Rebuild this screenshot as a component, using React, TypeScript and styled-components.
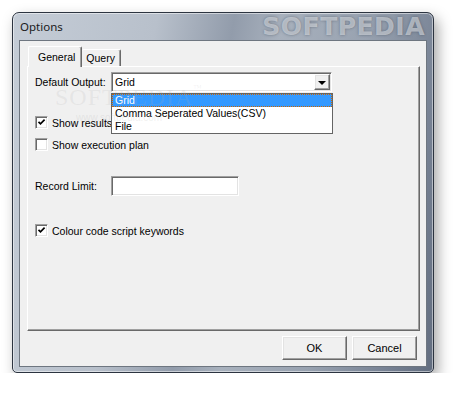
import styled, { createGlobalStyle } from "styled-components";

const GlobalStyle = createGlobalStyle`
  html, body {
    margin: 0;
    padding: 0;
    background: #ffffff;
  }
  body {
    font-family: "Liberation Sans", Arial, sans-serif;
    font-size: 10.5px;
    color: #000;
  }
`;

const OUTPUTS = ["Grid", "Comma Seperated Values(CSV)", "File"];

const CheckMark = () => (
  <svg width="9" height="9" viewBox="0 0 9 9">
    <path d="M1.5 3.8 L3.5 5.8 L7.6 1.7" fill="none" stroke="#000" strokeWidth="1.7" />
  </svg>
);

const Check = (props: { checked?: boolean; label: string }) => (
  <S.CheckRow>
    <S.Box>{props.checked && <CheckMark />}</S.Box>
    <span>{props.label}</span>
  </S.CheckRow>
);

const App = () => {
  return (
    <S.Page>
      <GlobalStyle />
      <S.Window>
        <S.TitleBar>
          <span>Options</span>
          <S.TitleMark>SOFTPEDIA</S.TitleMark>
        </S.TitleBar>

        <S.Client>
          <S.TabStrip>
            <S.Tab $active>General</S.Tab>
            <S.Tab>Query</S.Tab>
          </S.TabStrip>

          <S.Panel>
            <S.FieldRow $top={5}>
              <S.Label>Default Output:</S.Label>
              <S.Combo>
                <span>Grid</span>
                <S.ComboButton>
                  <S.Arrow />
                </S.ComboButton>
                <S.DropList>
                  {OUTPUTS.map((o, i) => (
                    <S.Option key={o} $selected={i === 0}>
                      {o}
                    </S.Option>
                  ))}
                </S.DropList>
              </S.Combo>
            </S.FieldRow>

            <S.Spacer $h={24} />
            <Check checked label="Show results in grid" />
            <S.Spacer $h={9} />
            <Check label="Show execution plan" />

            <S.FieldRow $top={25}>
              <S.Label>Record Limit:</S.Label>
              <S.TextBox />
            </S.FieldRow>

            <S.Spacer $h={28} />
            <Check checked label="Colour code script keywords" />

            <S.Mark>
              SOFTPEDIA<sup>™</sup>
            </S.Mark>
            <S.MarkUrl>www.softpedia.com</S.MarkUrl>
          </S.Panel>

          <S.ButtonBar>
            <S.Button>OK</S.Button>
            <S.Button>Cancel</S.Button>
          </S.ButtonBar>
        </S.Client>
      </S.Window>
    </S.Page>
  );
};

export default App;

const raised = `
  border: 1px solid;
  border-color: #ffffff #696969 #696969 #ffffff;
  box-shadow: inset -1px -1px 0 #a0a0a0, inset 1px 1px 0 #e3e3e3;
`;

const sunken = `
  border: 1px solid;
  border-color: #a0a0a0 #ffffff #ffffff #a0a0a0;
  box-shadow: inset 1px 1px 0 #696969, inset -1px -1px 0 #e3e3e3;
`;

const S = {
  Page: styled.div`
    padding: 12px 0 0 12px;
  `,
  Window: styled.div`
    position: relative;
    box-sizing: border-box;
    width: 422px;
    height: 361px;
    display: flex;
    flex-direction: column;
    padding: 0 6px 5px 6px;
    border: 1px solid #2c3440;
    border-radius: 7px 7px 5px 5px;
    background: linear-gradient(100deg, #c4ccd6 0%, #b8c0cb 30%, #929cab 46%, #a8b1bd 56%, #98a2b0 74%, #778294 90%, #626d7f 100%);
    box-shadow: 4px 6px 14px rgba(0, 0, 0, 0.35), inset 0 0 0 1px rgba(255, 255, 255, 0.5);
  `,
  TitleBar: styled.div`
    position: relative;
    height: 27px;
    display: flex;
    align-items: center;
    padding-left: 1px;
    font-family: "Noto Sans", "Open Sans", sans-serif;
    font-size: 11.5px;
    color: #1a1a1a;
    overflow: hidden;
  `,
  TitleMark: styled.span`
    position: absolute;
    right: 2px;
    top: -1px;
    font-family: "DejaVu Sans", sans-serif;
    font-weight: bold;
    font-size: 25px;
    letter-spacing: 0.5px;
    color: rgba(235, 238, 242, 0.55);
    text-shadow: 0 0 3px rgba(70, 80, 95, 0.6);
    pointer-events: none;
  `,
  Client: styled.div`
    flex: 1;
    display: flex;
    flex-direction: column;
    padding: 5px 6px 0 7px;
    background: #f0f0f0;
    border: 1px solid #6e7680;
  `,
  TabStrip: styled.div`
    display: flex;
    align-items: flex-end;
    height: 20px;
    padding-left: 1px;
  `,
  Tab: styled.div<{ $active?: boolean }>`
    position: relative;
    box-sizing: border-box;
    display: flex;
    align-items: center;
    height: ${(p) => (p.$active ? "21px" : "17px")};
    margin-bottom: ${(p) => (p.$active ? "-1px" : "0")};
    padding: ${(p) => (p.$active ? "0 6px 1px 9px" : "0 5px 0 4px")};
    background: #f0f0f0;
    border-top: 1px solid #ffffff;
    border-left: ${(p) => (p.$active ? "1px solid #ffffff" : "0")};
    border-right: 1px solid #696969;
    box-shadow: inset -1px 0 0 #a0a0a0;
    border-radius: 2px 2px 0 0;
    z-index: ${(p) => (p.$active ? 2 : 1)};
  `,
  Panel: styled.div`
    position: relative;
    box-sizing: border-box;
    height: 265px;
    display: flex;
    flex-direction: column;
    padding: 0 0 0 7px;
    border: 1px solid;
    border-color: #ffffff #696969 #696969 #ffffff;
    box-shadow: inset -1px -1px 0 #a0a0a0;
  `,
  FieldRow: styled.div<{ $top: number }>`
    display: flex;
    align-items: center;
    margin-top: ${(p) => p.$top}px;
  `,
  Label: styled.span`
    width: 76px;
    flex: none;
  `,
  Combo: styled.div`
    position: relative;
    box-sizing: border-box;
    width: 221px;
    height: 20px;
    display: flex;
    align-items: center;
    padding-left: 3px;
    background: #ffffff;
    ${sunken}
  `,
  ComboButton: styled.div`
    position: absolute;
    top: 1px;
    right: 1px;
    box-sizing: border-box;
    width: 16px;
    height: 16px;
    display: flex;
    align-items: center;
    justify-content: center;
    background: #f0f0f0;
    ${raised}
  `,
  Arrow: styled.div`
    width: 0;
    height: 0;
    border-left: 4px solid transparent;
    border-right: 4px solid transparent;
    border-top: 4px solid #000;
    margin-top: 1px;
  `,
  DropList: styled.div`
    position: absolute;
    top: 20px;
    left: -1px;
    box-sizing: border-box;
    width: 222px;
    padding: 0;
    background: #ffffff;
    border: 1px solid #646464;
    z-index: 5;
  `,
  Option: styled.div<{ $selected?: boolean }>`
    box-sizing: border-box;
    height: 13px;
    line-height: 12px;
    padding-left: 3px;
    white-space: nowrap;
    color: ${(p) => (p.$selected ? "#ffffff" : "#000000")};
    background: ${(p) => (p.$selected ? "#3399ff" : "transparent")};
    outline: ${(p) => (p.$selected ? "1px dotted #cc6600" : "none")};
    outline-offset: -1px;
  `,
  Spacer: styled.div<{ $h: number }>`
    height: ${(p) => p.$h}px;
    flex: none;
  `,
  CheckRow: styled.label`
    display: flex;
    align-items: center;
    gap: 4px;
    height: 13px;
  `,
  Box: styled.div`
    box-sizing: border-box;
    width: 13px;
    height: 13px;
    display: flex;
    align-items: center;
    justify-content: center;
    background: #ffffff;
    ${sunken}
  `,
  TextBox: styled.div`
    box-sizing: border-box;
    width: 128px;
    height: 20px;
    background: #ffffff;
    ${sunken}
  `,
  Mark: styled.div`
    position: absolute;
    left: 27px;
    top: 16px;
    font-family: "Liberation Serif", serif;
    font-size: 24px;
    letter-spacing: 1px;
    color: rgba(175, 175, 175, 0.16);
    pointer-events: none;
    z-index: 6;
    sup {
      font-size: 9px;
      vertical-align: 14px;
    }
  `,
  MarkUrl: styled.div`
    position: absolute;
    left: 48px;
    top: 45px;
    font-size: 10px;
    color: rgba(175, 175, 175, 0.2);
    pointer-events: none;
    z-index: 6;
  `,
  ButtonBar: styled.div`
    display: flex;
    justify-content: flex-end;
    gap: 5px;
    margin-top: 5px;
    padding-right: 3px;
  `,
  Button: styled.div`
    box-sizing: border-box;
    width: 65px;
    height: 24px;
    display: flex;
    align-items: center;
    justify-content: center;
    background: #f0f0f0;
    font-size: 11px;
    ${raised}
  `,
};
